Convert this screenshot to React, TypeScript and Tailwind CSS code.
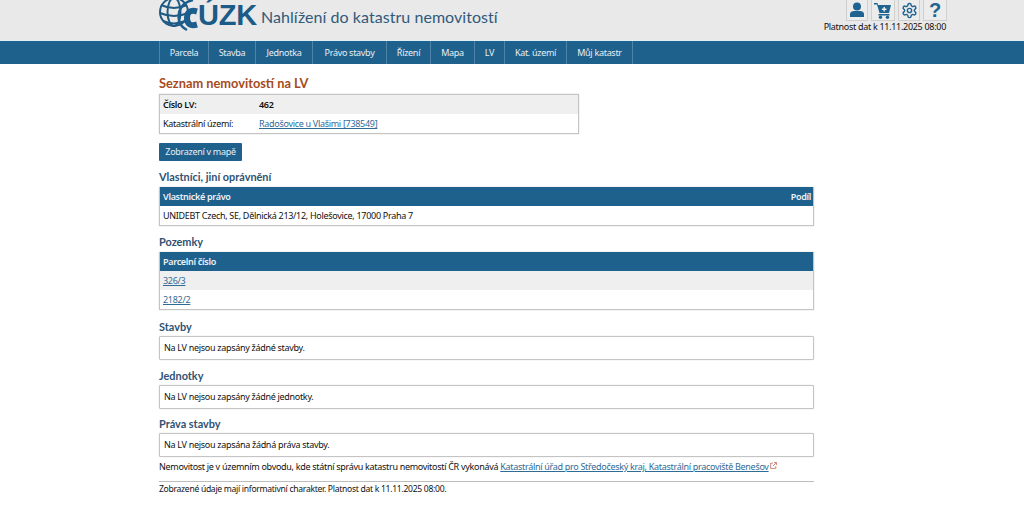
import React from "react";

const nav = [
  ["Parcela", "w-[50px]"],
  ["Stavba", "w-[47px]"],
  ["Jednotka", "w-[57px]"],
  ["Právo stavby", "w-[74px]"],
  ["Řízení", "w-[44px]"],
  ["Mapa", "w-[44px]"],
  ["LV", "w-[30px]"],
  ["Kat. území", "w-[62px]"],
  ["Můj katastr", "w-[66px]"],
];

function Heading({ children, mt = "mt-[8px]" }: { children: React.ReactNode; mt?: string }) {
  return <h2 className={`${mt} h-[17px] font-['Lato',sans-serif] tracking-normal text-[10.9px] leading-[15px] font-bold text-[#2f5273]`}>{children}</h2>;
}

function Message({ children }: { children: React.ReactNode }) {
  return (
    <div className="h-[24px] border border-[#c4c4c4] rounded-[1px] shadow-[0_0_1px_#bbb] pl-[4px] text-[9px] leading-[22px] text-[#111]">
      {children}
    </div>
  );
}

function IconBox({ children, w }: { children: React.ReactNode; w: string }) {
  return (
    <div className={`${w} h-[21px] flex items-center justify-center bg-[#ececec] border border-[#cfcfcf] border-t-0`}>
      {children}
    </div>
  );
}

export default function App() {
  return (
    <div className="w-[1024px] h-[527px] overflow-hidden bg-white font-['Noto_Sans','Open_Sans',sans-serif] tracking-[-0.3px] text-[#111]">
      <header className="h-[41px] bg-[#e9e9e9] border-b border-[#dff1f7] pl-[159px] pr-[77px] flex justify-between">
        <div className="flex items-start">
          <div className="w-[39px] h-[40px] overflow-hidden">
            <svg width="39" height="40" viewBox="0 0 39 40">
              <g fill="none" stroke="#1f5a85" strokeWidth="2">
                <circle cx="15" cy="12" r="14" />
                <ellipse cx="15" cy="12" rx="6.5" ry="14" />
                <path d="M2 5 Q15 11 28 5 M1 13 Q15 19 29 13 M4 21 Q15 26 26 21" />
              </g>
              <path d="M34 0 C24 2 18 10 20 20 C21 25 24 28 28 30" fill="none" stroke="#1d5e8c" strokeWidth="2.5" />
              <path d="M38 11.5 C31 9.5 28 12.5 28 18 C28 23.5 31 26.5 38 24.5" fill="none" stroke="#1d5e8c" strokeWidth="6" />
            </svg>
          </div>
          <div className="-mt-[3px] text-[29px] leading-[36px] font-bold tracking-[-0.2px] text-[#1c5a87] font-['Liberation_Sans',sans-serif]">ÚZK</div>
          <div className="ml-[4px] mt-[5px] font-['Lato',sans-serif] text-[16px] leading-[24px] tracking-[0.05px] text-[#305a7c]">Nahlížení do katastru nemovitostí</div>
        </div>
        <div className="flex flex-col items-end">
          <div className="flex gap-[3px]">
            <IconBox w="w-[22px]">
              <svg width="16" height="16" viewBox="0 0 16 16" fill="#1f6390"><circle cx="8" cy="4.5" r="4" /><path d="M1 15 V12 C1 10 3 9 5 9 H11 C13 9 15 10 15 12 V15 Z" /></svg>
            </IconBox>
            <IconBox w="w-[24px]">
              <svg width="18" height="17" viewBox="0 0 18 17" fill="#1f6390"><path d="M0 1 H3.5 L4 3 H17 L15 11 H5.5 L3 2.6 H0 Z" /><path d="M4.5 12 H15.5 V13.5 H4.5 Z" /><circle cx="6.5" cy="15.2" r="1.7" /><circle cx="13.5" cy="15.2" r="1.7" /><path d="M9.5 5 h1.4 v1.6 h1.6 v1.3 h-1.6 v1.6 h-1.4 v-1.6 h-1.6 v-1.3 h1.6 z" fill="#ececec" /></svg>
            </IconBox>
            <IconBox w="w-[22px]">
              <svg width="17" height="17" viewBox="0 0 24 24" fill="none" stroke="#1f6390" strokeWidth="2"><path d="M12.22 2h-.44a2 2 0 0 0-2 2v.18a2 2 0 0 1-1 1.73l-.43.25a2 2 0 0 1-2 0l-.15-.08a2 2 0 0 0-2.73.73l-.22.38a2 2 0 0 0 .73 2.73l.15.1a2 2 0 0 1 1 1.72v.51a2 2 0 0 1-1 1.74l-.15.09a2 2 0 0 0-.73 2.73l.22.38a2 2 0 0 0 2.73.73l.15-.08a2 2 0 0 1 2 0l.43.25a2 2 0 0 1 1 1.73V20a2 2 0 0 0 2 2h.44a2 2 0 0 0 2-2v-.18a2 2 0 0 1 1-1.73l.43-.25a2 2 0 0 1 2 0l.15.08a2 2 0 0 0 2.73-.73l.22-.39a2 2 0 0 0-.73-2.73l-.15-.08a2 2 0 0 1-1-1.74v-.5a2 2 0 0 1 1-1.74l.15-.09a2 2 0 0 0 .73-2.73l-.22-.38a2 2 0 0 0-2.73-.73l-.15.08a2 2 0 0 1-2 0l-.43-.25a2 2 0 0 1-1-1.73V4a2 2 0 0 0-2-2z" /><circle cx="12" cy="12" r="3" /></svg>
            </IconBox>
            <IconBox w="w-[24px]">
              <span className="text-[20px] leading-[19px] font-bold text-[#1f6390] font-['Liberation_Sans',sans-serif]">?</span>
            </IconBox>
          </div>
          <div className="mr-[1px] text-[9px] leading-[12px] text-[#111]">Platnost dat k 11.11.2025 08:00</div>
        </div>
      </header>
      <nav className="h-[23px] bg-[#1f618d] pl-[159px] flex">
        {nav.map(([t, w], i) => (
          <div key={t} className={`${w} ${i === 0 ? "border-l" : ""} h-full border-r border-[#4f83a8] text-center text-[9px] leading-[23px] text-[#e6eef4]`}>
            {t}
          </div>
        ))}
      </nav>
      <main className="w-[655px] ml-[159px]">
        <h1 className="mt-[11px] h-[17px] font-['Lato',sans-serif] tracking-normal text-[12.8px] leading-[17px] font-bold text-[#a64b21]">Seznam nemovitostí na LV</h1>
        <div className="mt-[2px] w-[420px] border border-[#c4c4c4] shadow-[0_0_1px_#bbb] text-[9px]">
          <div className="h-[19px] bg-[#efefef] flex pl-[3px] font-semibold leading-[19px]">
            <div className="w-[96px]">Číslo LV:</div><div>462</div>
          </div>
          <div className="h-[19px] flex pl-[3px] leading-[19px]">
            <div className="w-[96px]">Katastrální území:</div><a className="underline text-[#2f6b97]">Radošovice u Vlašimi [738549]</a>
          </div>
        </div>
        <button className="block mt-[9px] h-[18px] w-[83px] bg-[#1f618d] rounded-[1px] text-center text-[9px] leading-[18px] text-[#e6eef4]">Zobrazení v mapě</button>
        <Heading>Vlastníci, jiní oprávnění</Heading>
        <div className="mt-[1px] border border-[#c4c4c4] border-t-0 shadow-[0_0_1px_#bbb] text-[9px]">
          <div className="h-[19px] bg-[#1f618d] flex justify-between pl-[3px] pr-[2px] font-semibold leading-[19px] text-[#eef3f7]">
            <div>Vlastnické právo</div><div>Podíl</div>
          </div>
          <div className="h-[19px] pl-[3px] leading-[19px]">UNIDEBT Czech, SE, Dělnická 213/12, Holešovice, 17000 Praha 7</div>
        </div>
        <Heading>Pozemky</Heading>
        <div className="mt-[1px] border border-[#c4c4c4] border-t-0 shadow-[0_0_1px_#bbb] text-[9px]">
          <div className="h-[19px] bg-[#1f618d] pl-[3px] font-semibold leading-[20px] text-[#eef3f7]">Parcelní číslo</div>
          <div className="h-[19px] bg-[#efefef] pl-[3px] leading-[20px]"><a className="underline text-[#2f6b97]">326/3</a></div>
          <div className="h-[19px] pl-[3px] leading-[20px]"><a className="underline text-[#2f6b97]">2182/2</a></div>
        </div>
        <Heading mt="mt-[9px]">Stavby</Heading>
        <Message>Na LV nejsou zapsány žádné stavby.</Message>
        <Heading>Jednotky</Heading>
        <Message>Na LV nejsou zapsány žádné jednotky.</Message>
        <Heading mt="mt-[7px]">Práva stavby</Heading>
        <Message>Na LV nejsou zapsána žádná práva stavby.</Message>
        <p className="mt-[2px] h-[15px] text-[9px] leading-[15px] whitespace-nowrap">
          Nemovitost je v územním obvodu, kde státní správu katastru nemovitostí ČR vykonává{" "}
          <a className="underline text-[#2f6b97]">Katastrální úřad pro Středočeský kraj, Katastrální pracoviště Benešov</a>
          <svg className="inline-block ml-[1px] align-[1px]" width="7" height="7" viewBox="0 0 7 7" fill="none" stroke="#cf6a5a" strokeWidth="0.8"><path d="M3 1.2 H0.6 V6.4 H5.8 V4 M3 4 L6.4 0.6 M4 0.5 H6.5 V3" /></svg>
        </p>
        <div className="mt-[7px] border-t border-[#bdbdbd] text-[8.6px] leading-[14px]">Zobrazené údaje mají informativní charakter. Platnost dat k 11.11.2025 08:00.</div>
      </main>
    </div>
  );
}
